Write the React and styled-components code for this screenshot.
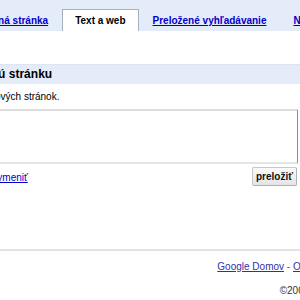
import React from 'react';
import styled, { createGlobalStyle } from 'styled-components';

const GlobalStyle = createGlobalStyle`
    * { box-sizing: border-box; }
    body {
        margin: 0;
        background: #fff;
        font-family: "Liberation Sans", Arial, sans-serif;
        font-size: 10px;
        color: #000;
        overflow: hidden;
    }
`;

const BLUE_BG = '#e5ecf9';
const LINK = '#0000cc';

const Page = styled.div`
    margin-left: -147px;
    width: 918px;
`;

const TabBar = styled.div`
    display: flex;
    align-items: flex-end;
    height: 31px;
    padding-left: 111px;
    background: ${BLUE_BG};
`;

const Tab = styled.a`
    display: block;
    height: 22px;
    line-height: 21px;
    padding: 0 12px;
    margin-right: 1px;
    font-weight: bold;
    font-size: 10px;
    white-space: nowrap;
    color: ${LINK};
    text-decoration: underline;
    background: ${p => (p.$active ? '#fff' : 'transparent')};
    border: 1px solid ${p => (p.$active ? '#a8b0c0' : 'transparent')};
    border-bottom: none;

    ${p => p.$active && `
        color: #000;
        text-decoration: none;
    `}
`;

const SectionHeader = styled.div`
    margin-top: 33px;
    height: 20px;
    background: ${BLUE_BG};
    border-top: 1px solid #dde4f4;
`;

const HeaderTitle = styled.h2`
    margin: 0;
    font-size: 12px;
    line-height: 19px;
    font-weight: bold;
    white-space: nowrap;
`;

const Column = styled.div`
    width: 445px;
`;

const Hint = styled.p`
    margin: 7px 0 0;
    padding-left: 8px;
    font-size: 10px;
    line-height: 12px;
    white-space: nowrap;
`;

const TextBox = styled.textarea`
    display: block;
    width: 100%;
    height: 55px;
    margin-top: 6px;
    padding: 2px;
    resize: none;
    border: 2px solid #dcdcdc;
    border-right: 1px solid #8c8c8c;
    border-bottom: 2px solid #e4e4e4;
    background: #fff;
`;

const Controls = styled.div`
    display: flex;
    align-items: center;
    justify-content: space-between;
    margin-top: 3px;
`;

const LangPick = styled.div`
    display: flex;
    align-items: center;
    gap: 8px;
`;

const LangSelect = styled.div`
    width: 130px;
    height: 16px;
    border: 1px solid #aaa;
    font-size: 10px;
    line-height: 14px;
    padding-left: 3px;
    white-space: nowrap;
    overflow: hidden;
`;

const SwapLink = styled.a`
    color: ${LINK};
    text-decoration: underline;
    font-size: 10px;
    margin-top: 2px;
`;

const SubmitButton = styled.button`
    min-width: 43px;
    height: 19px;
    padding: 0 3px;
    margin-right: 1px;
    font-family: "Liberation Sans", Arial, sans-serif;
    font-size: 10px;
    font-weight: bold;
    color: #111;
    background: linear-gradient(#fafafa, #e4e4e4);
    border: 1px solid #c8c8c8;
    border-right-color: #b0b0b0;
    border-bottom-color: #b0b0b0;
    border-radius: 2px;
`;

const Rule = styled.hr`
    margin: 63px 0 0;
    border: none;
    border-top: 2px solid #e2e2e2;
    height: 0;
`;

const Footer = styled.div`
    text-align: center;
    font-size: 10px;
    padding-top: 10px;
`;

const FooterLinks = styled.div`
    line-height: 12px;
    padding-left: 8px;
    color: #555;

    & a {
        color: #3030a8;
        text-decoration: underline;
    }
`;

const Copyright = styled.div`
    margin-top: 12px;
    line-height: 12px;
    color: #333;
`;

const tabs = [
    { label: 'Hlavná stránka' },
    { label: 'Text a web', active: true },
    { label: 'Preložené vyhľadávanie' },
    { label: 'Nástroje prekladača' },
];

const App = () => {
    return (
        <Page>
            <GlobalStyle />
            <TabBar>
                {tabs.map((tab) => (
                    <Tab key={tab.label} $active={tab.active}>{tab.label}</Tab>
                ))}
            </TabBar>
            <SectionHeader>
                <Column>
                    <HeaderTitle>Preložiť text alebo webovú stránku</HeaderTitle>
                </Column>
            </SectionHeader>
            <Column>
                <Hint>Zadajte text alebo adresu webových stránok.</Hint>
                <TextBox />
                <Controls>
                    <LangPick>
                        <LangSelect>slovenčina » angličtina</LangSelect>
                        <SwapLink>Vymeniť</SwapLink>
                    </LangPick>
                    <SubmitButton>preložiť</SubmitButton>
                </Controls>
            </Column>
            <Rule />
            <Footer>
                <FooterLinks>
                    <a>Google Domov</a> - <a>O službe Google Prekladač</a>
                </FooterLinks>
                <Copyright>©2008 Google</Copyright>
            </Footer>
        </Page>
    );
};

export default App;
